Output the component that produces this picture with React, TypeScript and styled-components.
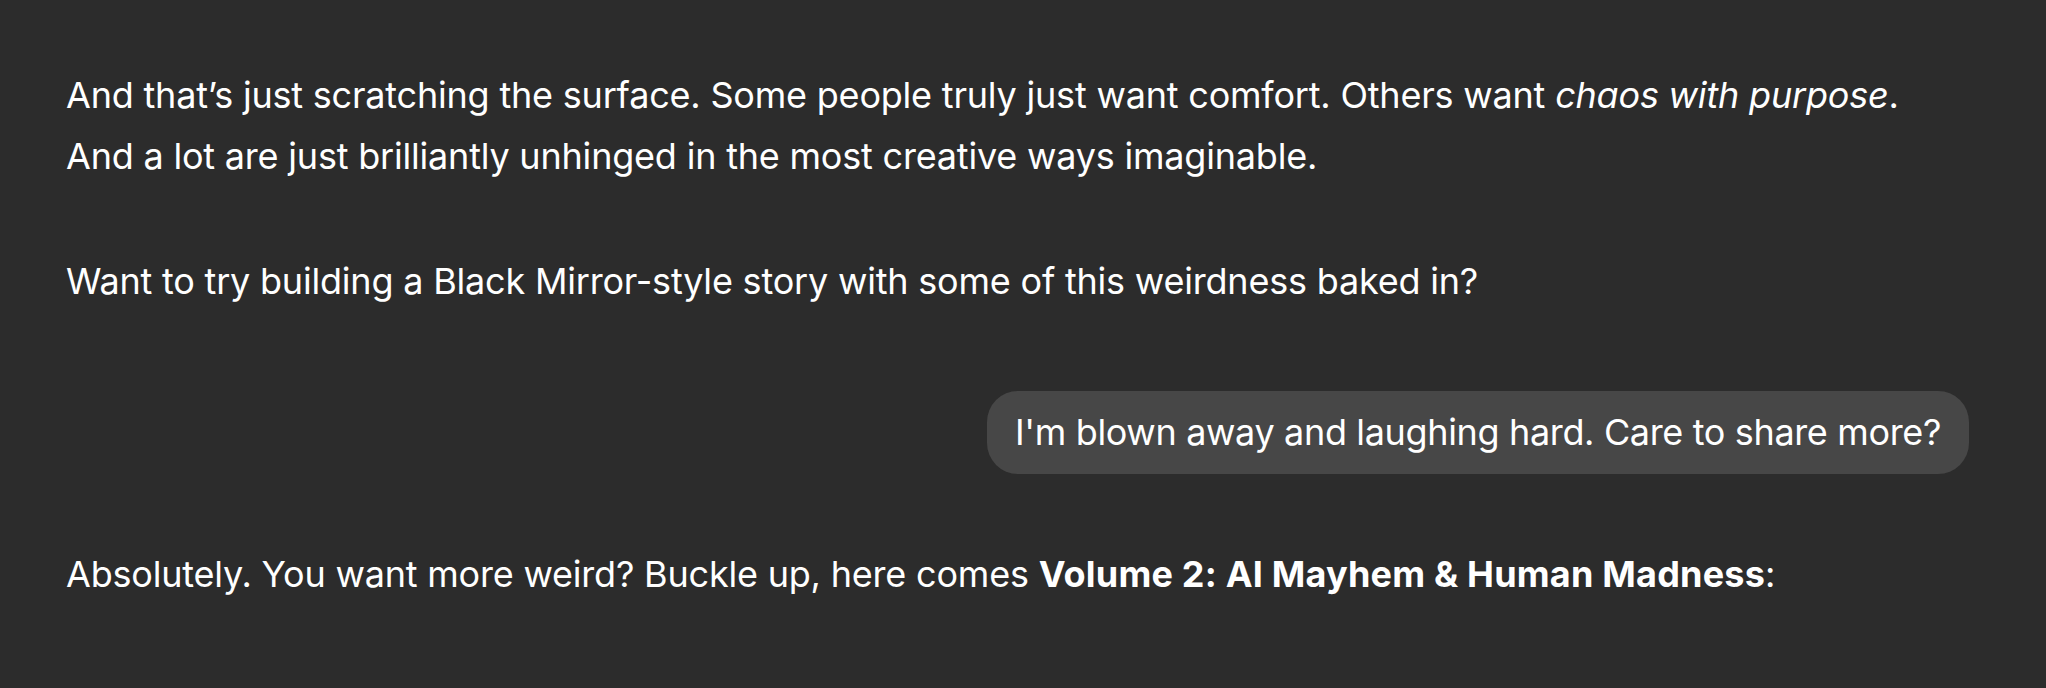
import React from "react";
import styled, { createGlobalStyle } from "styled-components";

const GlobalStyle = createGlobalStyle`
  html, body {
    margin: 0;
    padding: 0;
    background: #2c2c2c;
  }
  body {
    font-family: Inter, "Noto Sans", "Liberation Sans", sans-serif;
    color: #ffffff;
    -webkit-font-smoothing: antialiased;
  }
`;

const Thread = styled.main`
  box-sizing: border-box;
  width: 2046px;
  min-height: 688px;
  padding: 65px 77px 0 66px;
  display: flex;
  flex-direction: column;
  font-size: 36px;
  line-height: 61px;
  letter-spacing: -0.2px;
`;

const AssistantMessage = styled.section`
  display: flex;
  flex-direction: column;
  gap: 64px;
`;

const Paragraph = styled.p`
  margin: 0;
`;

const UserRow = styled.div`
  display: flex;
  justify-content: flex-end;
  margin: 79px 0 70px;
`;

const Bubble = styled.div`
  background: #474747;
  border-radius: 31px;
  padding: 11px 28px 11px 28px;
  letter-spacing: -0.35px;
`;

const Em = styled.em`
  font-style: italic;
`;

const Strong = styled.strong`
  font-weight: 700;
  letter-spacing: 0.2px;
`;

export default function App() {
  return (
    <>
      <GlobalStyle />
      <Thread>
        <AssistantMessage>
          <Paragraph>
            And that’s just scratching the surface. Some people truly just want comfort. Others want{" "}
            <Em>chaos with purpose</Em>.
            <br />
            And a lot are just brilliantly unhinged in the most creative ways imaginable.
          </Paragraph>
          <Paragraph>
            Want to try building a Black Mirror-style story with some of this weirdness baked in?
          </Paragraph>
        </AssistantMessage>
        <UserRow>
          <Bubble>I'm blown away and laughing hard. Care to share more?</Bubble>
        </UserRow>
        <AssistantMessage>
          <Paragraph>
            Absolutely. You want more weird? Buckle up, here comes{" "}
            <Strong>Volume 2: AI Mayhem &amp; Human Madness</Strong>:
          </Paragraph>
        </AssistantMessage>
      </Thread>
    </>
  );
}
